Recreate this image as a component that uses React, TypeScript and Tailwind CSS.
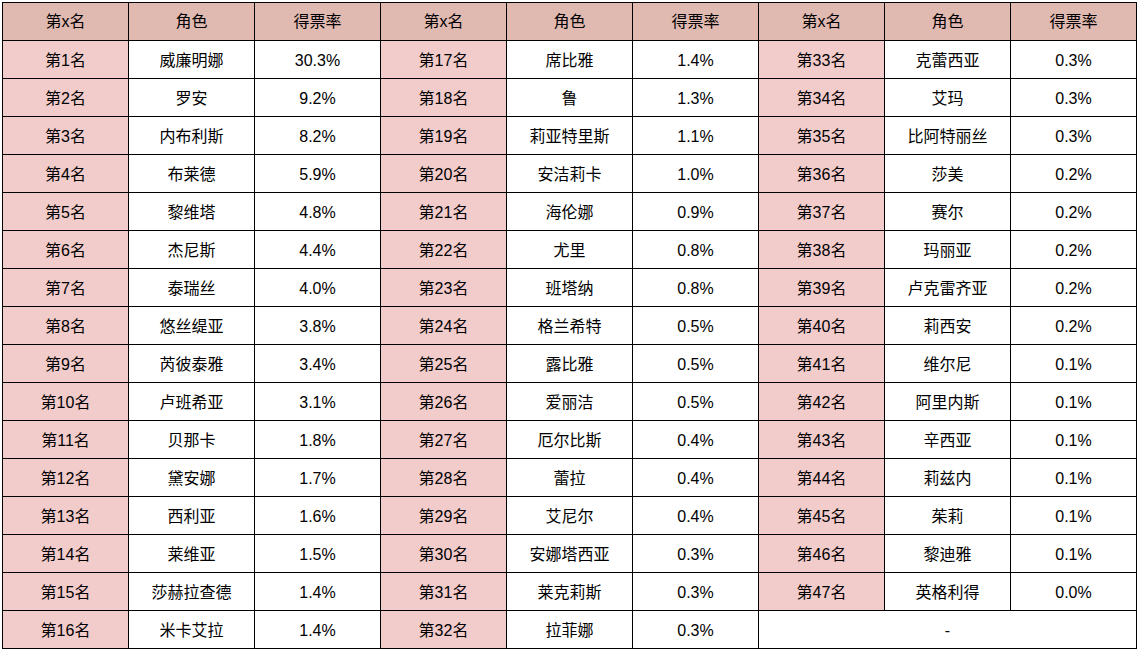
import React from 'react';

const names = [
  '威廉明娜', '罗安', '内布利斯', '布莱德', '黎维塔', '杰尼斯', '泰瑞丝', '悠丝缇亚',
  '芮彼泰雅', '卢班希亚', '贝那卡', '黛安娜', '西利亚', '莱维亚', '莎赫拉查德', '米卡艾拉',
  '席比雅', '鲁', '莉亚特里斯', '安洁莉卡', '海伦娜', '尤里', '班塔纳', '格兰希特',
  '露比雅', '爱丽洁', '厄尔比斯', '蕾拉', '艾尼尔', '安娜塔西亚', '莱克莉斯', '拉菲娜',
  '克蕾西亚', '艾玛', '比阿特丽丝', '莎美', '赛尔', '玛丽亚', '卢克雷齐亚', '莉西安',
  '维尔尼', '阿里内斯', '辛西亚', '莉兹内', '茱莉', '黎迪雅', '英格利得',
];

const rates = [
  '30.3%', '9.2%', '8.2%', '5.9%', '4.8%', '4.4%', '4.0%', '3.8%',
  '3.4%', '3.1%', '1.8%', '1.7%', '1.6%', '1.5%', '1.4%', '1.4%',
  '1.4%', '1.3%', '1.1%', '1.0%', '0.9%', '0.8%', '0.8%', '0.5%',
  '0.5%', '0.5%', '0.4%', '0.4%', '0.4%', '0.3%', '0.3%', '0.3%',
  '0.3%', '0.3%', '0.3%', '0.2%', '0.2%', '0.2%', '0.2%', '0.2%',
  '0.1%', '0.1%', '0.1%', '0.1%', '0.1%', '0.1%', '0.0%',
];

const head = 'border border-black h-[38px] p-0 text-center align-middle bg-[#e0b9b1] font-normal';
const cell = 'border border-black h-[38px] p-0 pt-[2px] text-center align-middle';

function Group({ idx }: { idx: number }) {
  if (idx >= names.length) {
    return <td colSpan={3} className={`${cell} bg-white`}>-</td>;
  }
  return (
    <>
      <td className={`${cell} bg-[#f2cbcb]`}>第{idx + 1}名</td>
      <td className={`${cell} bg-white`}>{names[idx]}</td>
      <td className={`${cell} bg-white`}>{rates[idx]}</td>
    </>
  );
}

export default function App() {
  const rows = Array.from({ length: 16 }, (_, i) => i);
  return (
    <div
      className="w-[1139px] h-[652px] bg-white pl-[2px] pt-[2px] text-black text-[16px]"
      style={{ fontFamily: '"Liberation Sans", "Noto Sans CJK SC", sans-serif' }}
    >
      <table className="border-collapse table-fixed w-[1135px]">
        <colgroup>
          {Array.from({ length: 9 }, (_, i) => (
            <col key={i} className="w-[126px]" />
          ))}
        </colgroup>
        <thead>
          <tr>
            {[0, 1, 2].map((g) => (
              <React.Fragment key={g}>
                <th className={head}>第x名</th>
                <th className={head}>角色</th>
                <th className={head}>得票率</th>
              </React.Fragment>
            ))}
          </tr>
        </thead>
        <tbody>
          {rows.map((r) => (
            <tr key={r}>
              <Group idx={r} />
              <Group idx={r + 16} />
              <Group idx={r + 32} />
            </tr>
          ))}
        </tbody>
      </table>
    </div>
  );
}
